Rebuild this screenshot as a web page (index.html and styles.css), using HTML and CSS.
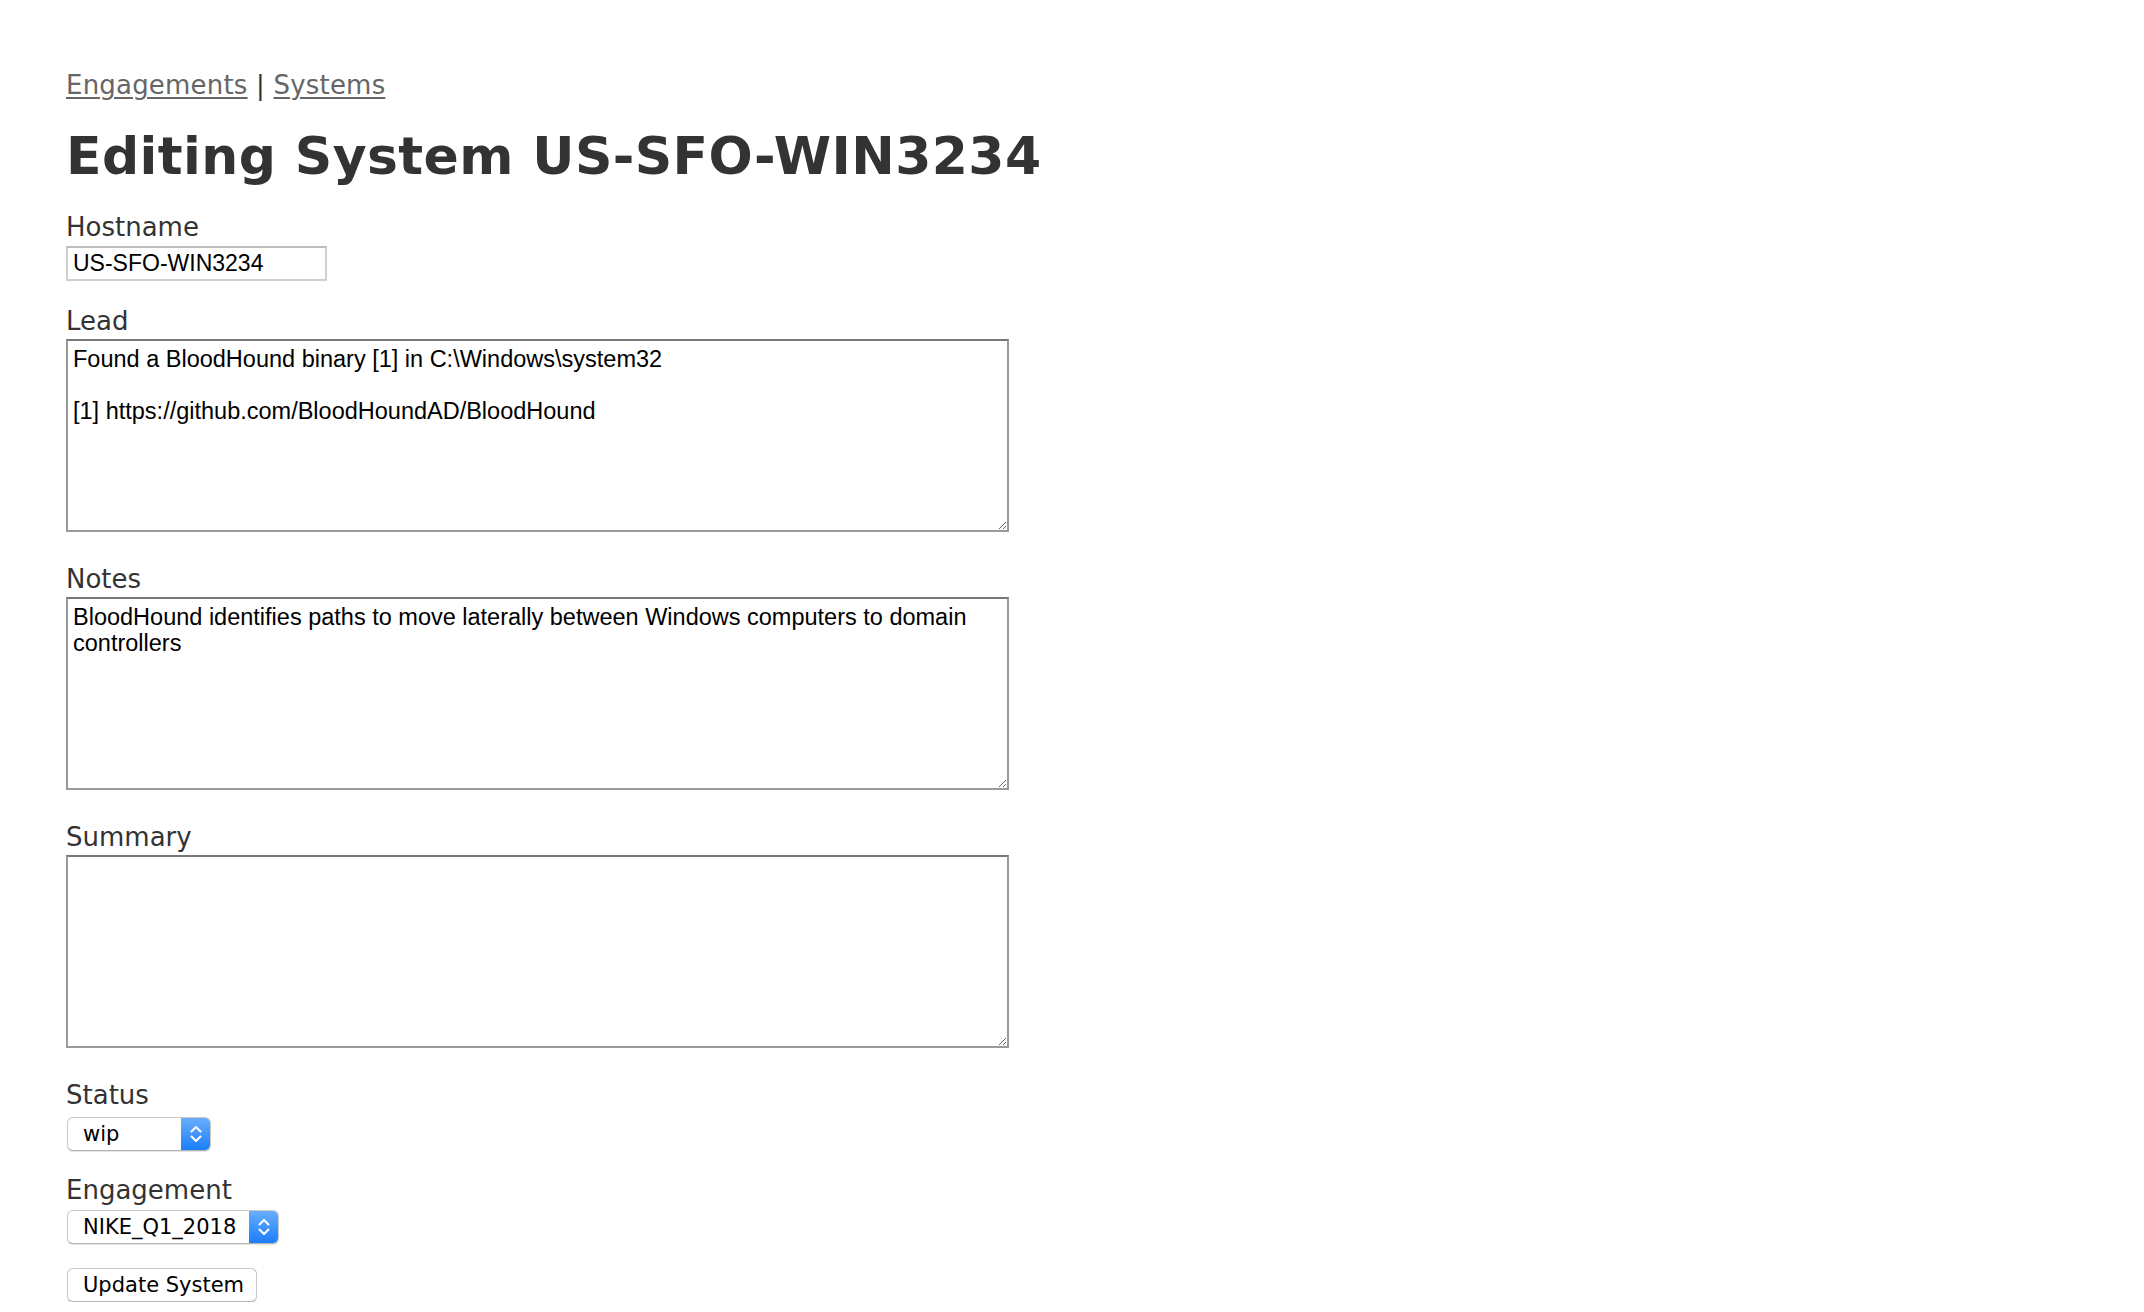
FILE: index.html
```html
<!DOCTYPE html>
<html lang="en">
<head>
<meta charset="utf-8">
<title>Editing System</title>
<link rel="stylesheet" href="styles.css">
</head>
<body>
<div class="nav"><a href="#" class="nav-link">Engagements</a> | <a href="#" class="nav-link">Systems</a></div>
<h1 class="title">Editing System US-SFO-WIN3234</h1>
<form class="form">
  <div class="field">
    <label class="label" for="hostname">Hostname</label>
    <input class="text-input" id="hostname" type="text" value="US-SFO-WIN3234">
  </div>
  <div class="field">
    <label class="label" for="lead">Lead</label>
    <textarea class="area" id="lead">Found a BloodHound binary [1] in C:\Windows\system32

[1] https://github.com/BloodHoundAD/BloodHound</textarea>
  </div>
  <div class="field">
    <label class="label" for="notes">Notes</label>
    <textarea class="area" id="notes">BloodHound identifies paths to move laterally between Windows computers to domain controllers</textarea>
  </div>
  <div class="field">
    <label class="label" for="summary">Summary</label>
    <textarea class="area" id="summary"></textarea>
  </div>
  <div class="field">
    <label class="label">Status</label>
    <div class="select select-status">
      <span class="select-value">wip</span>
      <span class="select-arrow">
        <svg width="14" height="20" viewBox="0 0 14 20"><path d="M2.5 7.5 L7 3 L11.5 7.5 M2.5 12.5 L7 17 L11.5 12.5" fill="none" stroke="#fff" stroke-width="2" stroke-linecap="round" stroke-linejoin="round"/></svg>
      </span>
    </div>
  </div>
  <div class="field">
    <label class="label">Engagement</label>
    <div class="select select-engagement">
      <span class="select-value">NIKE_Q1_2018</span>
      <span class="select-arrow">
        <svg width="14" height="20" viewBox="0 0 14 20"><path d="M2.5 7.5 L7 3 L11.5 7.5 M2.5 12.5 L7 17 L11.5 12.5" fill="none" stroke="#fff" stroke-width="2" stroke-linecap="round" stroke-linejoin="round"/></svg>
      </span>
    </div>
  </div>
  <div class="actions">
    <button type="button" class="button">Update System</button>
  </div>
</form>
</body>
</html>
```
FILE: styles.css
```css
html, body {
  background: #fff;
}
body {
  margin: 67px 66px 66px 66px;
  color: #333;
  font-family: "DejaVu Sans", Verdana, sans-serif;
  font-size: 26px;
  line-height: 36px;
}
.nav {
  height: 36px;
  letter-spacing: 0.2px;
}
.nav-link {
  color: #666;
  text-decoration: underline;
  text-decoration-thickness: 2px;
  text-underline-offset: 3px;
}
.title {
  font-size: 52px;
  line-height: 36px;
  font-weight: bold;
  margin: 35px 0;
  letter-spacing: 0.4px;
}
.form {
  margin: 0;
}
.field {
  display: flow-root;
  margin-bottom: 20px;
}
.label {
  display: block;
  line-height: 36px;
  height: 36px;
}
.text-input {
  display: block;
  box-sizing: border-box;
  width: 261px;
  height: 35px;
  margin: 1px 0 2px 0;
  padding: 0 5px;
  border: 2px solid #cfcfcf;
  border-top-color: #bdbdbd;
  font-family: "Liberation Sans", Arial, sans-serif;
  font-size: 23px;
  color: #000;
  background: #fff;
  outline: none;
}
.area {
  display: block;
  box-sizing: border-box;
  width: 943px;
  height: 193px;
  margin: 0 0 9px 0;
  padding: 5px 5px 3px 5px;
  border: 2px solid #9a9a9a;
  border-top-color: #777;
  font-family: "Liberation Sans", Arial, sans-serif;
  font-size: 23.5px;
  line-height: 26px;
  color: #000;
  background: #fff;
  outline: none;
  resize: both;
}
.select {
  display: flex;
  box-sizing: border-box;
  height: 34px;
  border: 1px solid #c8c8c8;
  border-bottom-color: #b4b4b4;
  border-radius: 6px;
  background: #fff;
  box-shadow: 0 1px 1px rgba(0,0,0,0.12);
  overflow: hidden;
  font-family: "DejaVu Sans", sans-serif;
  font-size: 21px;
  color: #000;
}
.select-status {
  width: 144px;
  margin: 4px 0 1px 1px;
}
.select-engagement {
  width: 212px;
  margin: 2px 0 4px 1px;
}
.select-value {
  flex: 1;
  padding-left: 15px;
  line-height: 32px;
}
.select-arrow {
  width: 29px;
  display: flex;
  align-items: center;
  justify-content: center;
  background: linear-gradient(#68aefc, #1b7ef9);
}
.actions {
  margin: 0;
}
.button {
  display: block;
  box-sizing: border-box;
  width: 190px;
  height: 34px;
  margin: 0 0 0 1px;
  padding: 0 0 0 15px;
  text-align: left;
  border: 1px solid #c8c8c8;
  border-bottom-color: #b4b4b4;
  border-radius: 6px;
  background: #fff;
  box-shadow: 0 1px 1px rgba(0,0,0,0.12);
  font-family: "DejaVu Sans", sans-serif;
  font-size: 21px;
  color: #000;
}
```
